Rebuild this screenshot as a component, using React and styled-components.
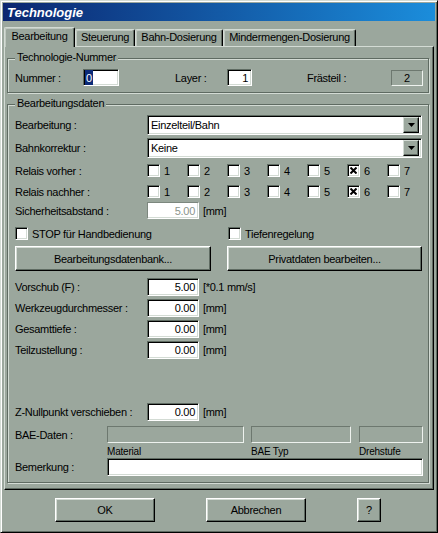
import React from "react";
import styled, { createGlobalStyle } from "styled-components";

const face = "#9ba79d";
const light = "#d3dbd4";
const shadow = "#5f6b62";

const GlobalStyle = createGlobalStyle`
  html, body {
    margin: 0;
    padding: 0;
    background: ${face};
  }
  body {
    font-family: "Liberation Sans", Arial, sans-serif;
    font-size: 11px;
    letter-spacing: -0.3px;
    color: #000;
  }
  * {
    box-sizing: border-box;
  }
`;

const Window = styled.div`
  width: 438px;
  height: 533px;
  background: ${face};
  border: 1px solid;
  border-color: ${light} #000 #000 ${light};
  box-shadow: inset 1px 1px 0 #fff, inset -1px -1px 0 ${shadow};
  padding: 2px;
  display: flex;
  flex-direction: column;
`;

const TitleBar = styled.div`
  height: 18px;
  flex-shrink: 0;
  background: linear-gradient(to right, #0b2670, #1b8ddb);
  color: #fff;
  font: bold italic 13px "Liberation Sans", Arial, sans-serif;
  letter-spacing: 0;
  display: flex;
  align-items: center;
  padding-left: 4px;
`;

const TabRow = styled.div`
  display: flex;
  align-items: flex-end;
  height: 20px;
  margin: 5px 1px 0;
  position: relative;
  z-index: 1;
`;

const Tab = styled.div`
  width: ${(p) => p.$w}px;
  height: ${(p) => (p.$active ? 20 : 17)}px;
  margin-bottom: ${(p) => (p.$active ? -1 : 0)}px;
  background: ${face};
  border-top: 1px solid ${light};
  border-left: 1px solid ${light};
  border-right: 1px solid #000;
  box-shadow: inset -1px 0 0 ${shadow}, inset 1px 1px 0 #c0c9c1;
  border-radius: 2px 2px 0 0;
  display: flex;
  align-items: center;
  justify-content: center;
  padding-bottom: ${(p) => (p.$active ? 3 : 2)}px;
  white-space: nowrap;
`;

const Panel = styled.div`
  margin: 0 1px;
  height: 444px;
  flex-shrink: 0;
  border: 1px solid;
  border-color: ${light} #000 #000 ${light};
  box-shadow: inset -1px -1px 0 ${shadow};
  padding: 11px 0 0 2px;
`;

const Group = styled.div`
  position: relative;
  width: 422px;
  border: 1px solid ${shadow};
  box-shadow: inset 1px 1px 0 ${light}, 1px 1px 0 ${light};
  margin-top: ${(p) => p.$mt || 0}px;
  padding: 10px 6px 6px 7px;
`;

const Legend = styled.span`
  position: absolute;
  top: -8px;
  left: 7px;
  padding: 0 2px;
  background: ${face};
  line-height: 13px;
`;

const Row = styled.div`
  display: flex;
  align-items: center;
  height: ${(p) => p.$h}px;
  margin-top: ${(p) => p.$mt || 0}px;
  padding-left: ${(p) => p.$pl || 0}px;
`;

const Label = styled.span`
  width: ${(p) => p.$w || 132}px;
  margin-left: ${(p) => p.$ml || 0}px;
  flex-shrink: 0;
  white-space: nowrap;
`;

const sunken = `
  border: 1px solid;
  border-color: ${shadow} #fff #fff ${shadow};
  box-shadow: inset 1px 1px 0 #000, inset -1px -1px 0 ${light};
`;

const Field = styled.div`
  ${sunken}
  width: ${(p) => p.$w || 52}px;
  height: ${(p) => p.$h || 18}px;
  background: #fff;
  display: flex;
  align-items: center;
  justify-content: ${(p) => (p.$left ? "flex-start" : "flex-end")};
  padding: 0 3px 0 2px;
  flex-shrink: 0;
  white-space: nowrap;
`;

const DisabledField = styled(Field)`
  border-color: #7c877e #fff #fff #7c877e;
  box-shadow: inset -1px -1px 0 ${light};
  color: #8b958c;
`;

const Selected = styled.span`
  background: #0b2a78;
  color: #fff;
  height: 100%;
  display: flex;
  align-items: center;
  padding: 0 1px;
  margin-left: -1px;
`;

const StaticBox = styled.div`
  width: ${(p) => p.$w}px;
  height: ${(p) => p.$h || 17}px;
  margin-left: ${(p) => p.$ml || 0}px;
  border: 1px solid;
  border-color: #6d786f #eef2ee #eef2ee #6d786f;
  display: flex;
  align-items: center;
  justify-content: center;
  flex-shrink: 0;
`;

const Unit = styled.span`
  margin-left: 4px;
  white-space: nowrap;
`;

const Combo = styled.div`
  ${sunken}
  width: 275px;
  height: 20px;
  background: #fff;
  display: flex;
  align-items: center;
  padding: 2px;
`;

const ComboText = styled.span`
  flex: 1;
  padding-left: 1px;
`;

const ArrowButton = styled.div`
  width: 16px;
  height: 16px;
  background: ${face};
  border: 1px solid;
  border-color: ${light} #000 #000 ${light};
  box-shadow: inset -1px -1px 0 ${shadow};
  display: flex;
  align-items: center;
  justify-content: center;
`;

const CheckItem = styled.div`
  width: ${(p) => p.$w || 40}px;
  display: flex;
  align-items: center;
  flex-shrink: 0;
  white-space: nowrap;
`;

const Box = styled.div`
  ${sunken}
  width: 13px;
  height: 13px;
  background: #fff;
  margin-right: 4px;
  display: flex;
  align-items: center;
  justify-content: center;
`;

const Button = styled.div`
  width: ${(p) => p.$w}px;
  height: ${(p) => p.$h || 25}px;
  margin-left: ${(p) => p.$ml || 0}px;
  background: ${face};
  border: 1px solid;
  border-color: #fff #000 #000 #fff;
  box-shadow: inset -1px -1px 0 ${shadow}, inset 1px 1px 0 ${light};
  display: flex;
  align-items: center;
  justify-content: center;
  flex-shrink: 0;
  white-space: nowrap;
`;

const Caption = styled.span`
  width: ${(p) => p.$w}px;
  font-size: 10px;
  letter-spacing: -0.2px;
  flex-shrink: 0;
`;

const Footer = styled.div`
  display: flex;
  margin-top: 8px;
  padding-left: 52px;
  gap: 51px;
`;

const Check = ({ checked, children, w }) => (
  <CheckItem $w={w}>
    <Box>
      {checked && (
        <svg width="7" height="7" viewBox="0 0 7 7">
          <path d="M0.5 0.5 L6.5 6.5 M6.5 0.5 L0.5 6.5" stroke="#000" strokeWidth="2" />
        </svg>
      )}
    </Box>
    {children}
  </CheckItem>
);

const DropDown = ({ value }) => (
  <Combo>
    <ComboText>{value}</ComboText>
    <ArrowButton>
      <svg width="7" height="4" viewBox="0 0 7 4">
        <path d="M0 0 H7 L3.5 4 Z" fill="#000" />
      </svg>
    </ArrowButton>
  </Combo>
);

const relais = [1, 2, 3, 4, 5, 6, 7];

const NumberRow = ({ label, value, unit, mt }) => (
  <Row $h={18} $mt={mt}>
    <Label>{label}</Label>
    <Field>{value}</Field>
    <Unit>{unit}</Unit>
  </Row>
);

export default function App() {
  return (
    <>
      <GlobalStyle />
      <Window>
        <TitleBar>Technologie</TitleBar>
        <TabRow>
          <Tab $w={71} $active>Bearbeitung</Tab>
          <Tab $w={60}>Steuerung</Tab>
          <Tab $w={88}>Bahn-Dosierung</Tab>
          <Tab $w={133}>Mindermengen-Dosierung</Tab>
        </TabRow>
        <Panel>
          <Group>
            <Legend>Technologie-Nummer</Legend>
            <Row $h={17}>
              <Label $w={68}>Nummer :</Label>
              <Field $w={36} $h={17} $left>
                <Selected>0</Selected>
              </Field>
              <Label $w={52} $ml={56}>Layer :</Label>
              <Field $w={25} $h={17}>1</Field>
              <Label $w={84} $ml={55}>Frästeil :</Label>
              <StaticBox $w={32} $h={16}>2</StaticBox>
            </Row>
          </Group>

          <Group $mt={11}>
            <Legend>Bearbeitungsdaten</Legend>
            <Row $h={20}>
              <Label>Bearbeitung :</Label>
              <DropDown value="Einzelteil/Bahn" />
            </Row>
            <Row $h={20} $mt={3}>
              <Label>Bahnkorrektur :</Label>
              <DropDown value="Keine" />
            </Row>
            <Row $h={21} $mt={2}>
              <Label>Relais vorher :</Label>
              {relais.map((n) => (
                <Check key={n} checked={n === 6}>{n}</Check>
              ))}
            </Row>
            <Row $h={21}>
              <Label>Relais nachher :</Label>
              {relais.map((n) => (
                <Check key={n} checked={n === 6}>{n}</Check>
              ))}
            </Row>
            <Row $h={17}>
              <Label>Sicherheitsabstand :</Label>
              <DisabledField $h={17}>5.00</DisabledField>
              <Unit>[mm]</Unit>
            </Row>
            <Row $h={19} $mt={5}>
              <Check w={213}>STOP für Handbedienung</Check>
              <Check w={180}>Tiefenregelung</Check>
            </Row>
            <Row $h={25} $mt={3}>
              <Button $w={196}>Bearbeitungsdatenbank...</Button>
              <Button $w={195} $ml={16}>Privatdaten bearbeiten...</Button>
            </Row>
            <NumberRow mt={7} label="Vorschub (F) :" value="5.00" unit="[*0.1 mm/s]" />
            <NumberRow mt={3} label="Werkzeugdurchmesser :" value="0.00" unit="[mm]" />
            <NumberRow mt={3} label="Gesamttiefe :" value="0.00" unit="[mm]" />
            <NumberRow mt={3} label="Teilzustellung :" value="0.00" unit="[mm]" />
            <NumberRow mt={44} label="Z-Nullpunkt verschieben :" value="0.00" unit="[mm]" />
            <Row $h={17} $mt={5}>
              <Label $w={92}>BAE-Daten :</Label>
              <StaticBox $w={137} />
              <StaticBox $w={100} $ml={7} />
              <StaticBox $w={64} $ml={8} />
            </Row>
            <Row $h={14} $mt={1} $pl={92}>
              <Caption $w={144}>Material</Caption>
              <Caption $w={108}>BAE Typ</Caption>
              <Caption $w={64}>Drehstufe</Caption>
            </Row>
            <Row $h={18}>
              <Label $w={92}>Bemerkung :</Label>
              <Field $w={316} $left />
            </Row>
          </Group>
        </Panel>
        <Footer>
          <Button $w={100} $h={24}>OK</Button>
          <Button $w={100} $h={24}>Abbrechen</Button>
          <Button $w={24} $h={24}>?</Button>
        </Footer>
      </Window>
    </>
  );
}
